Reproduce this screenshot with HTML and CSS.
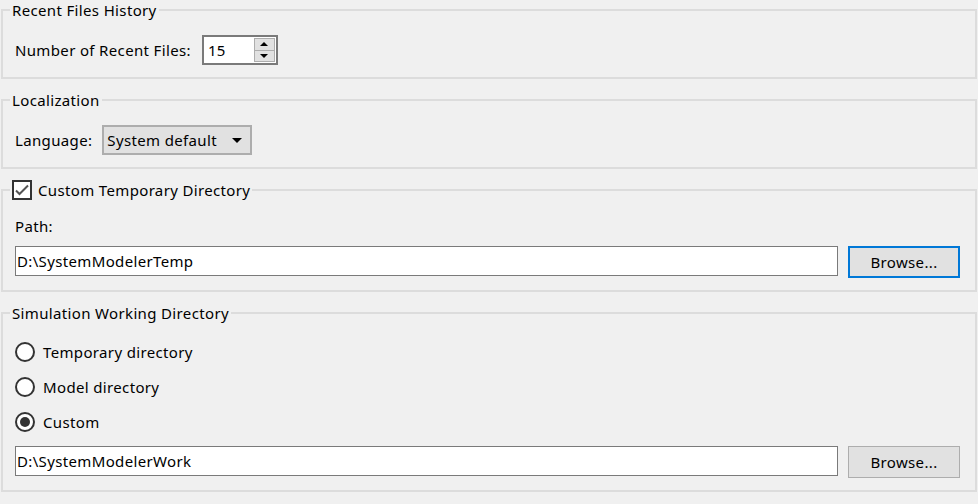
FILE: index.html
```html
<!DOCTYPE html>
<html>
<head>
<meta charset="utf-8">
<link rel="stylesheet" href="styles.css">
</head>
<body>
<div class="page">
  <fieldset class="group g1">
    <legend>Recent Files History</legend>
    <div class="row">
      <span class="label">Number of Recent Files:</span>
      <div class="spin">
        <span class="val">15</span>
        <div class="btns">
          <span class="sbtn"><i class="up"></i></span>
          <span class="sbtn"><i class="down"></i></span>
        </div>
      </div>
    </div>
  </fieldset>

  <fieldset class="group g2">
    <legend>Localization</legend>
    <div class="row">
      <span class="label">Language:</span>
      <div class="combo">
        <span>System default</span>
        <i class="down combo-arrow"></i>
      </div>
    </div>
  </fieldset>

  <fieldset class="group g3">
    <legend class="check-legend">
      <span class="checkbox">
        <svg width="16" height="16" viewBox="0 0 16 16"><polyline points="2,8.5 5.5,12 14,3.5" fill="none" stroke="#555" stroke-width="2"/></svg>
      </span>
      <span>Custom Temporary Directory</span>
    </legend>
    <div class="label">Path:</div>
    <div class="path-row">
      <div class="textbox">D:\SystemModelerTemp</div>
      <div class="button focused">Browse...</div>
    </div>
  </fieldset>

  <fieldset class="group g4">
    <legend>Simulation Working Directory</legend>
    <div class="radios">
      <div class="radio-row"><span class="radio"></span><span>Temporary directory</span></div>
      <div class="radio-row"><span class="radio"></span><span>Model directory</span></div>
      <div class="radio-row"><span class="radio checked"></span><span>Custom</span></div>
    </div>
    <div class="path-row work-row">
      <div class="textbox">D:\SystemModelerWork</div>
      <div class="button">Browse...</div>
    </div>
  </fieldset>
</div>
</body>
</html>
```

FILE: styles.css
```css
* { box-sizing: border-box; }
html, body { margin: 0; background: #f0f0f0; }
body {
  font-family: "Noto Sans", "Open Sans", sans-serif;
  font-size: 15px;
  line-height: 20px;
  letter-spacing: 0.35px;
  color: #000;
}
.page {
  padding: 0 1px;
  display: flex;
  flex-direction: column;
  gap: 11px;
}
.group {
  margin: 0;
  min-width: 0;
  border: 2px solid #dcdcdc;
  padding: 15px 15px 12px 12px;
}
.group legend {
  margin-left: -5px;
  padding: 0 2px;
  height: 20px;
  line-height: 20px;
}
.g3 { padding-top: 16px; }
.g4 { padding-top: 19px; }

.row {
  display: flex;
  align-items: center;
  gap: 11px;
}
.g2 .row { gap: 10px; }

.spin {
  width: 76px;
  height: 30px;
  border: 2px solid #7a7a7a;
  background: #fff;
  display: flex;
  align-items: center;
}
.spin .val { flex: 1; padding-left: 4px; }
.btns {
  width: 21px;
  height: 24px;
  margin-right: 1px;
  display: flex;
  flex-direction: column;
}
.sbtn {
  flex: 1;
  background: #e1e1e1;
  border: 1px solid #adadad;
  display: flex;
  align-items: center;
  justify-content: center;
}
.sbtn + .sbtn { border-top: none; }
.up {
  width: 0; height: 0;
  border-left: 4px solid transparent;
  border-right: 4px solid transparent;
  border-bottom: 4px solid #000;
}
.down {
  width: 0; height: 0;
  border-left: 4px solid transparent;
  border-right: 4px solid transparent;
  border-top: 4px solid #000;
}

.combo {
  width: 150px;
  height: 30px;
  border: 2px solid #adadad;
  background: #e1e1e1;
  display: flex;
  align-items: center;
  padding-left: 3px;
}
.combo-arrow {
  margin-left: auto;
  margin-right: 8px;
  border-left-width: 5px;
  border-right-width: 5px;
  border-top-width: 5px;
}

.check-legend {
  display: flex;
  align-items: center;
  gap: 6px;
}
.checkbox {
  width: 20px;
  height: 20px;
  border: 2px solid #333;
  background: #fff;
  display: flex;
  align-items: center;
  justify-content: center;
}

.path-row {
  display: flex;
  align-items: flex-start;
  gap: 10px;
  margin-top: 10px;
}
.work-row { margin-top: 14px; }
.textbox {
  flex: 1;
  height: 30px;
  border: 1px solid #7a7a7a;
  background: #fff;
  padding-left: 1px;
  display: flex;
  align-items: center;
}
.button {
  width: 112px;
  height: 32px;
  border: 1px solid #adadad;
  background: #e1e1e1;
  display: flex;
  align-items: center;
  justify-content: center;
}
.button.focused { border: 2px solid #0078d7; }

.radios {
  display: flex;
  flex-direction: column;
  gap: 15px;
}
.radio-row {
  display: flex;
  align-items: center;
  gap: 8px;
  height: 20px;
}
.radio {
  width: 20px;
  height: 20px;
  border: 2px solid #333;
  border-radius: 50%;
  background: #fff;
  display: flex;
  align-items: center;
  justify-content: center;
}
.radio.checked::after {
  content: "";
  width: 10px;
  height: 10px;
  border-radius: 50%;
  background: #333;
}
```
